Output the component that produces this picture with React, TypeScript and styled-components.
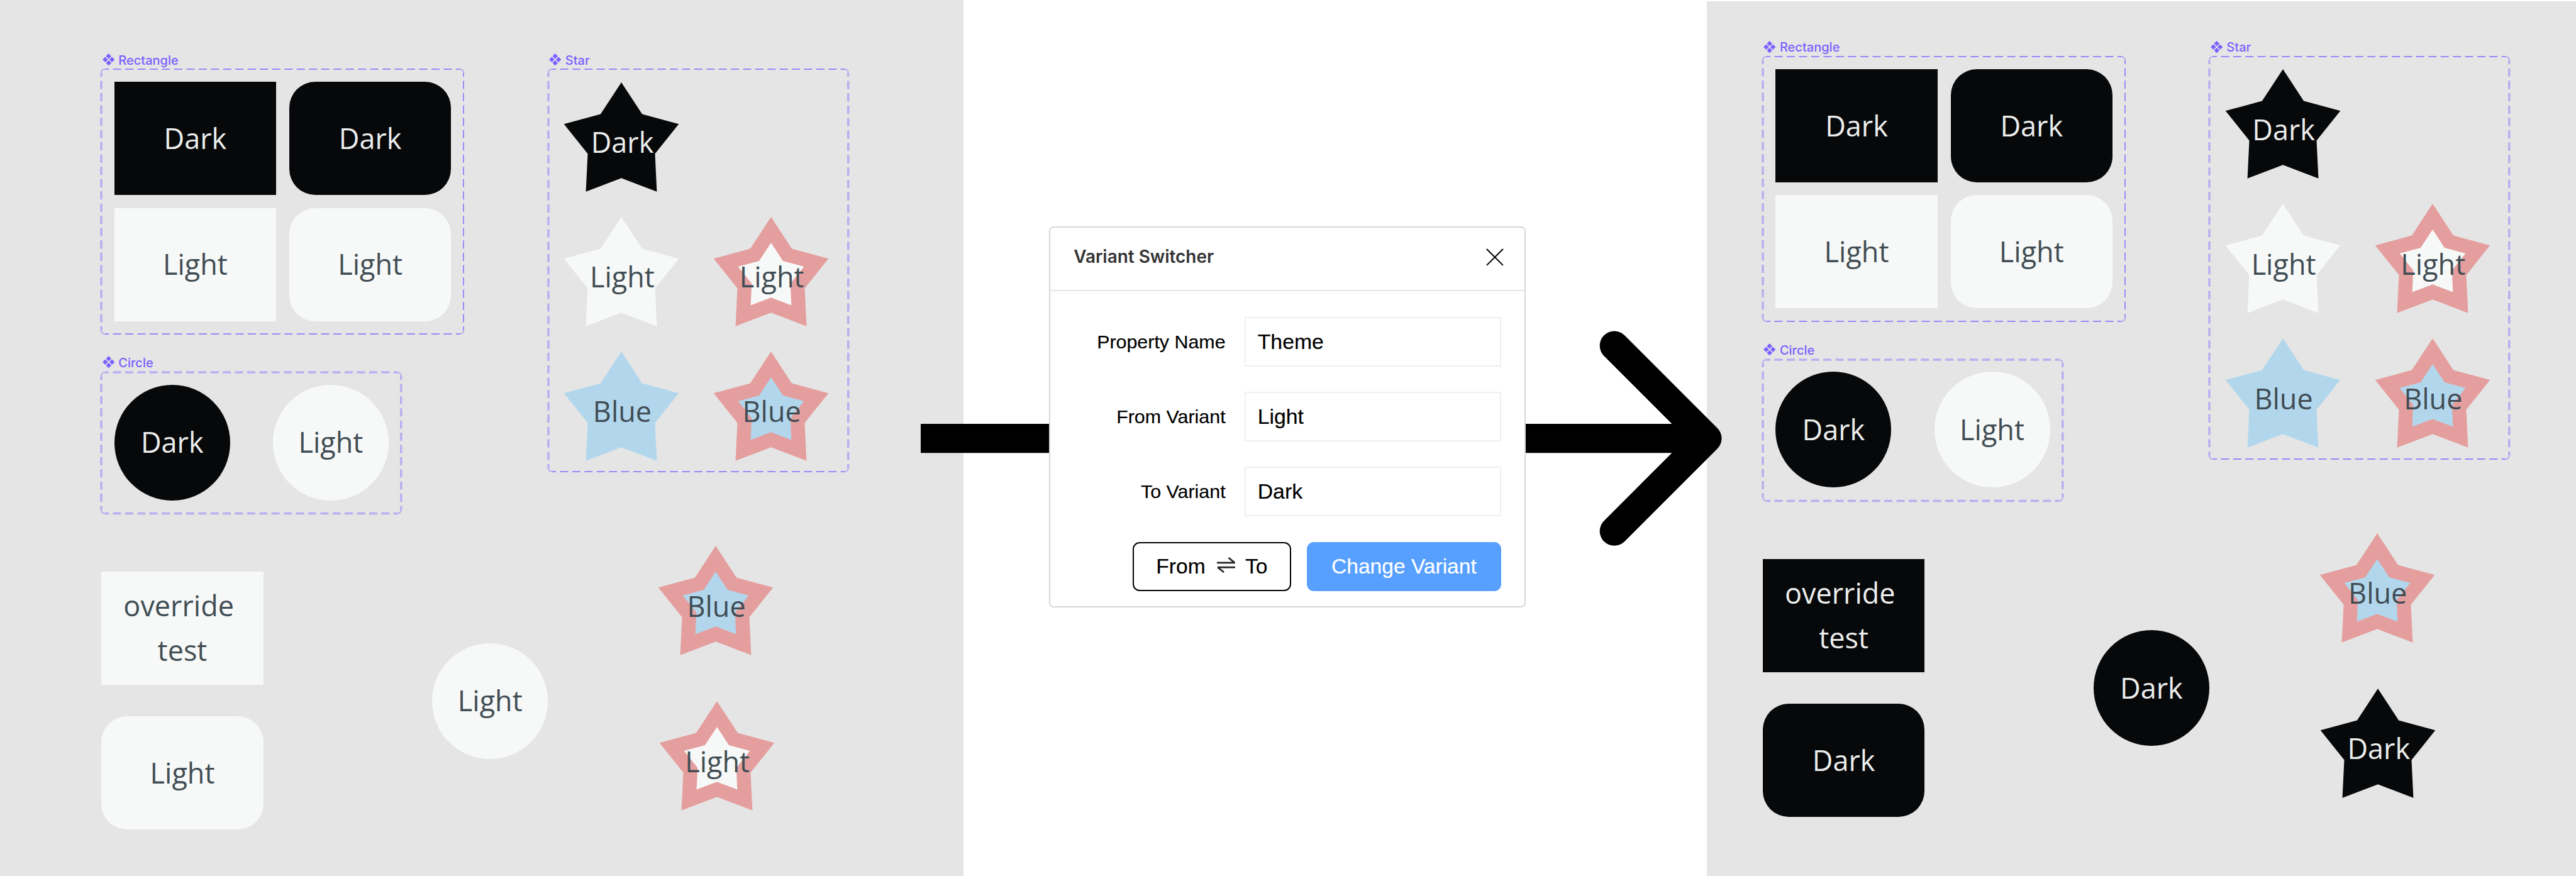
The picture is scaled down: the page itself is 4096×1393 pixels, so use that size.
import React from "react";
import styled, { createGlobalStyle, css } from "styled-components";

/* Design units are mapped to the 4096px wide stage. */
const SCALE = 4096 / 4416;
const u = (n: number) => `${+(n * SCALE).toFixed(3)}px`;

const color = {
  canvas: "#e5e5e5",
  purple: "#7b61ff",
  dark: "#07080a",
  light: "#f7f9f8",
  blue: "#b2d7ed",
  pink: "#e59e9e",
  ink: "#414d54",
  paper: "#eceeed",
};

type Theme = "dark" | "light" | "blue";

const GlobalStyle = createGlobalStyle`
  *, *::before, *::after { box-sizing: border-box; }
  html, body { margin: 0; padding: 0; background: #fff; }
  body { overflow: hidden; }
`;

const Stage = styled.main`
  position: relative;
  display: grid;
  grid-template-columns: ${u(1652)} ${u(1274)} 1fr;
  width: 4096px;
  height: 1393px;
  overflow: hidden;
  background: #fff;
`;

const Canvas = styled.section<{ $top?: number }>`
  position: relative;
  margin-top: ${(p) => p.$top || 0}px;
  background: ${color.canvas};
  overflow: hidden;
`;

const CanvasLayer = styled.div<{ $x: number; $y: number }>`
  position: absolute;
  left: ${(p) => u(p.$x)};
  top: ${(p) => u(p.$y)};
`;

const CanvasNode = styled.div<{ $x: number; $y: number }>`
  position: absolute;
  left: ${(p) => u(p.$x)};
  top: ${(p) => u(p.$y)};
`;

const SetLabel = styled.div`
  display: flex;
  align-items: center;
  gap: ${u(6.6)};
  height: ${u(34)};
  padding-left: ${u(1.4)};
  color: ${color.purple};
  font: 500 ${u(21.6)} / 1 Inter, "Liberation Sans", sans-serif;
  white-space: nowrap;

  svg {
    width: ${u(21)};
    height: ${u(21)};
  }
  span {
    padding-top: ${u(2)};
  }
`;

const SetFrame = styled.div<{ $w: number; $h: number }>`
  position: relative;
  width: ${(p) => u(p.$w)};
  height: ${(p) => u(p.$h)};
`;

const Outline = styled.svg`
  position: absolute;
  inset: 0;
  width: 100%;
  height: 100%;
  overflow: visible;
  pointer-events: none;
`;

const VariantGrid = styled.div<{ $cell: number; $colGap: number; $rowGap: number; $padX: number; $padY: number }>`
  display: grid;
  grid-template-columns: repeat(2, ${(p) => u(p.$cell)});
  column-gap: ${(p) => u(p.$colGap)};
  row-gap: ${(p) => u(p.$rowGap)};
  padding: ${(p) => u(p.$padY)} ${(p) => u(p.$padX)};
`;

const shapeText = css<{ $theme: Theme }>`
  color: ${(p) => (p.$theme === "dark" ? color.paper : color.ink)};
  font-family: "Open Sans", "Noto Sans", sans-serif;
  font-weight: 400;
  font-size: ${u(48.5)};
  line-height: ${u(76)};
  text-align: center;
  white-space: pre;
`;

const Box = styled.div<{ $theme: Theme; $rounded?: boolean }>`
  ${shapeText}
  display: flex;
  align-items: center;
  justify-content: center;
  width: ${u(277.3)};
  height: ${u(194)};
  border-radius: ${(p) => (p.$rounded ? u(44.4) : 0)};
  background: ${(p) => color[p.$theme]};
`;

const Disc = styled(Box)`
  width: ${u(198.3)};
  height: ${u(198.3)};
  border-radius: 50%;
`;

const StarRoot = styled.div<{ $theme: Theme; $newRow?: boolean }>`
  ${shapeText}
  display: grid;
  place-items: center;
  width: ${u(207)};
  height: ${u(207)};
  ${(p) => p.$newRow && "grid-column: 1;"}

  > * {
    grid-area: 1 / 1;
  }
  > svg {
    width: 100%;
    height: 100%;
  }
  > span {
    padding-left: ${u(2.2)};
  }
`;

const starPoints = (r: number) =>
  Array.from({ length: 10 }, (_, i) => {
    const radius = i % 2 ? r * 0.586 : r;
    const a = (Math.PI / 5) * i;
    return `${(103.5 + radius * Math.sin(a)).toFixed(2)},${(103.5 - radius * Math.cos(a)).toFixed(2)}`;
  }).join(" ");

function Star({ theme, bordered, newRow, children }: { theme: Theme; bordered?: boolean; newRow?: boolean; children: string }) {
  return (
    <StarRoot $theme={theme} $newRow={newRow}>
      <svg viewBox="0 0 207 207">
        <polygon points={starPoints(103.5)} fill={bordered ? color.pink : color[theme]} />
        {bordered && <polygon points={starPoints(59.4)} fill={color[theme]} />}
      </svg>
      <span>{children}</span>
    </StarRoot>
  );
}

function ComponentIcon() {
  return (
    <svg viewBox="0 0 21 21" fill="currentColor" stroke="currentColor" strokeWidth="1" strokeLinejoin="round">
      <path d="M10.5 0.6l4.1 4.1-4.1 4.1-4.1-4.1zM10.5 12.2l4.1 4.1-4.1 4.1-4.1-4.1zM4.7 6.4l4.1 4.1-4.1 4.1-4.1-4.1zM16.3 6.4l4.1 4.1-4.1 4.1-4.1-4.1z" />
    </svg>
  );
}

type Edge = "soft" | "crisp";

/* Dashed outline: every edge starts and ends on half a dash. */
function DashedOutline({ w, h, edges }: { w: number; h: number; edges: [Edge, Edge, Edge, Edge] }) {
  const r = 6;
  const lines = [
    [r, 0, w - r, 0],
    [w, r, w, h - r],
    [r, h, w - r, h],
    [0, r, 0, h - r],
  ];
  return (
    <Outline viewBox={`0 0 ${w} ${h}`} fill="none">
      {lines.map(([x1, y1, x2, y2], i) => {
        const length = Math.hypot(x2 - x1, y2 - y1);
        const period = length / Math.round(length / 21);
        const dash = (period * 2) / 3;
        const soft = edges[i] === "soft";
        return (
          <line
            key={i}
            x1={x1}
            y1={y1}
            x2={x2}
            y2={y2}
            stroke={soft ? "#b9aef0" : "#9b87f8"}
            strokeWidth={soft ? 3.8 : 2.1}
            strokeDasharray={`${dash} ${period - dash}`}
            strokeDashoffset={dash / 2}
          />
        );
      })}
      <path
        d={`M0 ${r}A${r} ${r} 0 0 1 ${r} 0M${w - r} 0A${r} ${r} 0 0 1 ${w} ${r}M${w} ${h - r}A${r} ${r} 0 0 1 ${w - r} ${h}M${r} ${h}A${r} ${r} 0 0 1 0 ${h - r}`}
        stroke="#b3a7f1"
        strokeWidth={2}
      />
    </Outline>
  );
}

interface SetProps {
  name: string;
  x: number;
  y: number;
  w: number;
  h: number;
  edges: [Edge, Edge, Edge, Edge];
  children: React.ReactNode;
}

function ComponentSet({ name, x, y, w, h, edges, children }: SetProps) {
  return (
    <CanvasNode $x={x} $y={y - 34}>
      <SetLabel>
        <ComponentIcon />
        <span>{name}</span>
      </SetLabel>
      <SetFrame $w={w} $h={h}>
        <DashedOutline w={w} h={h} edges={edges} />
        {children}
      </SetFrame>
    </CanvasNode>
  );
}

function Document({ switched }: { switched?: boolean }) {
  const theme: Theme = switched ? "dark" : "light";
  const label = switched ? "Dark" : "Light";
  return (
    <>
      <ComponentSet name="Rectangle" x={174} y={119} w={621} h={454} edges={["crisp", "crisp", "crisp", "soft"]}>
        <VariantGrid $cell={277.3} $colGap={22.7} $rowGap={22} $padX={22} $padY={21.6}>
          <Box $theme="dark">Dark</Box>
          <Box $theme="dark" $rounded>Dark</Box>
          <Box $theme="light">Light</Box>
          <Box $theme="light" $rounded>Light</Box>
        </VariantGrid>
      </ComponentSet>

      <ComponentSet name="Circle" x={174} y={638} w={514} h={242} edges={["soft", "soft", "soft", "soft"]}>
        <VariantGrid $cell={198.3} $colGap={73.6} $rowGap={0} $padX={22} $padY={21.5}>
          <Disc $theme="dark">Dark</Disc>
          <Disc $theme="light">Light</Disc>
        </VariantGrid>
      </ComponentSet>

      <ComponentSet name="Star" x={940} y={119} w={514} h={690} edges={["crisp", "soft", "crisp", "soft"]}>
        <VariantGrid $cell={207} $colGap={49.3} $rowGap={23.7} $padX={22.2} $padY={21.8}>
          <Star theme="dark">Dark</Star>
          <Star theme="light" newRow>Light</Star>
          <Star theme="light" bordered>Light</Star>
          <Star theme="blue" newRow>Blue</Star>
          <Star theme="blue" bordered>Blue</Star>
        </VariantGrid>
      </ComponentSet>

      <CanvasNode $x={174} $y={980}>
        <Box $theme={theme}>{"override \ntest"}</Box>
      </CanvasNode>
      <CanvasNode $x={174} $y={1228.3}>
        <Box $theme={theme} $rounded>{label}</Box>
      </CanvasNode>
      <CanvasNode $x={741} $y={1102.5}>
        <Disc $theme={theme}>{label}</Disc>
      </CanvasNode>
      <CanvasNode $x={1123.5} $y={935.7}>
        <Star theme="blue" bordered>Blue</Star>
      </CanvasNode>
      <CanvasNode $x={1125.2} $y={1202}>
        <Star theme={theme} bordered={!switched}>{label}</Star>
      </CanvasNode>
    </>
  );
}

const Middle = styled.section`
  padding: ${u(388)} 0 0 ${u(146)};
`;

const ArrowOverlay = styled.svg`
  position: absolute;
  left: ${u(1578)};
  top: ${u(560)};
  width: ${u(1380)};
  height: ${u(384)};
  z-index: 1;
`;

const Panel = styled.div`
  position: relative;
  z-index: 2;
  width: ${u(818)};
  height: ${u(654)};
  border: 2px solid #d3d8dc;
  border-radius: ${u(8)};
  background: #fff;
  font-family: "Liberation Sans", Arial, sans-serif;
  color: #000;
`;

const PanelHeader = styled.header`
  display: flex;
  align-items: center;
  justify-content: space-between;
  height: ${u(109.5)};
  padding: 0 ${u(36)} ${u(5)} ${u(40.5)};
  border-bottom: 2px solid #e5e5e5;

  svg {
    width: ${u(30)};
    height: ${u(30)};
  }
`;

const PanelTitle = styled.h1`
  margin: 0;
  color: #333;
  font: 600 ${u(30.1)} / 1 Inter, "Liberation Sans", sans-serif;
`;

const Form = styled.div`
  display: flex;
  flex-direction: column;
  gap: ${u(43.8)};
  padding: ${u(44)} ${u(40)} 0 0;
`;

const Field = styled.label`
  display: flex;
  align-items: center;
  justify-content: flex-end;
  gap: ${u(33)};
  font-size: ${u(32.8)};
  -webkit-text-stroke: 0.2px #000;
`;

const FieldValue = styled.div`
  display: flex;
  align-items: center;
  width: ${u(440)};
  height: ${u(84.6)};
  padding-left: ${u(20)};
  border: 2px solid #f0f0f0;
  font-size: ${u(36.4)};
`;

const Actions = styled.div`
  display: flex;
  justify-content: flex-end;
  gap: ${u(26.7)};
  padding-right: ${u(40)};
  margin-top: ${u(43.8)};
`;

const Button = styled.button<{ $primary?: boolean }>`
  display: flex;
  align-items: center;
  justify-content: center;
  gap: ${u(19)};
  width: ${(p) => u(p.$primary ? 334 : 271.3)};
  height: ${u(85)};
  padding: 0;
  border: ${(p) => (p.$primary ? "0" : "2px solid #000")};
  border-radius: ${u(12)};
  background: ${(p) => (p.$primary ? "#57a0ff" : "#fff")};
  color: ${(p) => (p.$primary ? "#fff" : "#000")};
  font: 400 ${u(36.2)} / 1 "Liberation Sans", Arial, sans-serif;
  -webkit-text-stroke: 0.2px currentColor;

  svg {
    width: ${u(32)};
    height: ${u(27)};
    margin: 0 ${u(-2)} ${u(5.4)} ${u(0.4)};
  }
`;

const fields = [
  { label: "Property Name", value: "Theme" },
  { label: "From Variant", value: "Light" },
  { label: "To Variant", value: "Dark" },
];

export default function App() {
  return (
    <>
      <GlobalStyle />
      <Stage>
        <Canvas>
          <Document />
        </Canvas>

        <Middle>
          <Panel>
            <PanelHeader>
              <PanelTitle>Variant Switcher</PanelTitle>
              <svg viewBox="0 0 30 30" stroke="#000" strokeWidth="2.2" fill="none">
                <path d="M1 1L29 29M29 1L1 29" />
              </svg>
            </PanelHeader>
            <Form>
              {fields.map((f) => (
                <Field key={f.label}>
                  {f.label}
                  <FieldValue>{f.value}</FieldValue>
                </Field>
              ))}
            </Form>
            <Actions>
              <Button>
                From
                <svg viewBox="0 0 32 27" fill="none" stroke="#222" strokeWidth="2.8">
                  <path d="M0 9.6H31M20 1L30.5 9.6" />
                  <path d="M32 17.4H1M12 26L1.5 17.4" />
                </svg>
                To
              </Button>
              <Button $primary>Change Variant</Button>
            </Actions>
          </Panel>
        </Middle>

        <Canvas $top={2}>
          <CanvasLayer $x={-78} $y={-24}>
            <Document switched />
          </CanvasLayer>
        </Canvas>

        <ArrowOverlay viewBox="0 0 1380 384" fill="none" stroke="#000" strokeWidth="50">
          <path d="M0 192H1348" />
          <path d="M1189 33L1348 192L1189 351" strokeLinecap="round" strokeLinejoin="round" />
        </ArrowOverlay>
      </Stage>
    </>
  );
}
